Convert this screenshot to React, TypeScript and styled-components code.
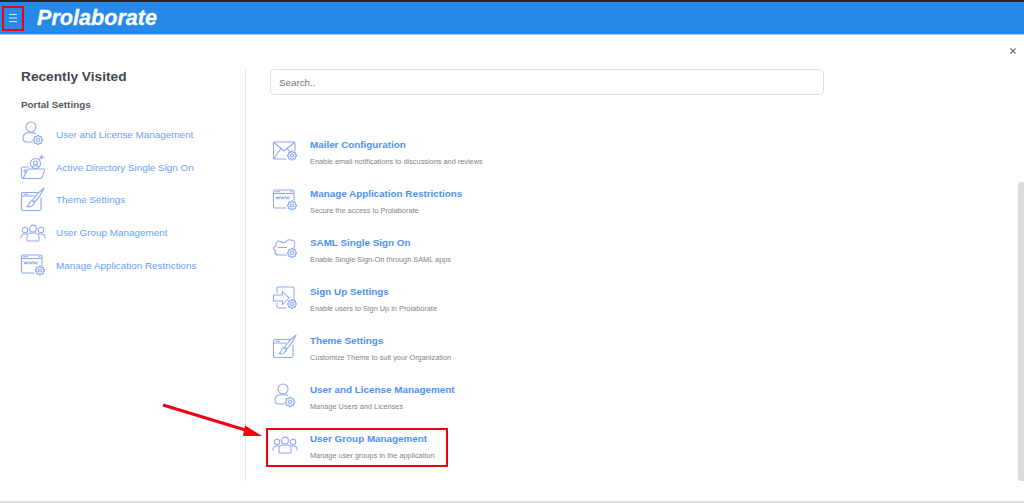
import React from "react";
import styled, { createGlobalStyle } from "styled-components";

const Global = createGlobalStyle`
  html, body { margin: 0; padding: 0; background: #fff; overflow: hidden; }
  body { font-family: "Liberation Sans", Arial, sans-serif; }
  * { box-sizing: border-box; }
`;

const Page = styled.div`
  position: relative;
  width: 1024px;
  height: 503px;
  display: flex;
  flex-direction: column;
  background: #fff;
  overflow: hidden;
`;
const Header = styled.header`
  height: 35px;
  flex: none;
  display: flex;
  align-items: center;
  background: #2688e8;
  border-top: 2px solid #24242e;
  border-bottom: 1px solid #a9c4e2;
  padding-left: 6px;
`;
const MenuButton = styled.button`
  width: 13px;
  height: 13px;
  padding: 0;
  border: 0;
  background: transparent;
  display: flex;
  align-items: center;
  justify-content: center;
  margin-right: 18px;
`;
const Logo = styled.div`
  color: #fff;
  font-size: 21.6px;
  font-weight: 700;
  font-style: italic;
  line-height: 30px;
  -webkit-text-stroke: 0.3px #fff;
`;
const Body = styled.main`
  flex: 1;
  min-height: 0;
  display: flex;
  padding-top: 35px;
`;
const Sidebar = styled.aside`
  width: 246px;
  flex: none;
  height: 411px;
  border-right: 1px solid #e2e2e2;
  padding-left: 21px;
`;
const SideTitle = styled.h2`
  margin: -1px 0 0;
  font-size: 13.7px;
  line-height: 16px;
  font-weight: 700;
  color: #44474d;
`;
const SideSub = styled.h3`
  margin: 14px 0 0;
  font-size: 9.9px;
  line-height: 12px;
  font-weight: 700;
  color: #54575d;
`;
const SideList = styled.div`
  display: flex;
  flex-direction: column;
  margin: 7px 0 0 -1px;
`;
const SideRow = styled.a`
  height: 32.75px;
  display: flex;
  align-items: center;
  gap: 10px;
  color: #6a9ff4;
  font-size: 9.9px;
`;
const SideIcon = styled.span`
  width: 26px;
  height: 26px;
  flex: none;
  display: flex;
`;
const Content = styled.section`
  flex: 1;
  padding-left: 24px;
`;
const Search = styled.input`
  display: block;
  width: 554px;
  height: 26px;
  margin: -1px 0 0 0;
  padding: 0 8px;
  border: 1px solid #dedde6;
  border-radius: 5px;
  font-family: "Liberation Sans", Arial, sans-serif;
  font-size: 9.8px;
  outline: none;
  &::placeholder { color: #74787e; opacity: 1; }
`;
const ItemList = styled.div`
  display: flex;
  flex-direction: column;
  margin-top: 43px;
`;
const Item = styled.a`
  height: 49px;
  display: flex;
  align-items: flex-start;
  padding-left: 2px;
`;
const ItemIcon = styled.span`
  width: 38px;
  height: 26px;
  flex: none;
  display: flex;
`;
const ItemText = styled.div`
  display: flex;
  flex-direction: column;
`;
const ItemTitle = styled.div`
  font-size: 9.85px;
  line-height: 13px;
  font-weight: 700;
  color: #4d91f3;
`;
const ItemDesc = styled.div`
  margin-top: 6px;
  font-size: 7.35px;
  line-height: 10px;
  color: #808388;
`;
const Scroll = styled.div`
  position: absolute;
  right: 0;
  top: 182px;
  width: 6px;
  height: 299px;
  background: #dcdcdc;
  border-radius: 3px 0 0 3px;
`;
const Close = styled.div`
  position: absolute;
  left: 1008px;
  top: 46px;
  width: 10px;
  height: 10px;
  display: flex;
`;
const FootBar = styled.div`
  position: absolute;
  left: 0;
  right: 0;
  bottom: 0;
  height: 2px;
  background: #dcdcdc;
`;
const RedBox = styled.div<{ $l: number; $t: number; $w: number; $h: number }>`
  position: absolute;
  left: ${(p) => p.$l}px;
  top: ${(p) => p.$t}px;
  width: ${(p) => p.$w}px;
  height: ${(p) => p.$h}px;
  border: 2px solid #f00010;
`;
const Arrow = styled.svg`
  position: absolute;
  left: 155px;
  top: 398px;
  width: 115px;
  height: 45px;
`;

const S = { fill: "none", stroke: "#8ea6f6", strokeWidth: 1.05, strokeLinecap: "round", strokeLinejoin: "round" } as const;

const gearPoints = (x: number, y: number, r: number) => {
  const out: string[] = [];
  const R = r + 1.2;
  for (let i = 0; i < 8; i++) {
    const a = (i * Math.PI) / 4;
    const s = 0.2;
    const pts: [number, number][] = [
      [r, a - s * 1.5],
      [R, a - s * 0.7],
      [R, a + s * 0.7],
      [r, a + s * 1.5],
    ];
    pts.forEach(([d, t]) => out.push(`${(x + Math.cos(t) * d).toFixed(2)},${(y + Math.sin(t) * d).toFixed(2)}`));
  }
  return out.join(" ");
};

const Gear = ({ x, y, r = 3.4 }: { x: number; y: number; r?: number }) => (
  <g>
    <polygon points={gearPoints(x, y, r)} fill="#fff" />
    <circle cx={x} cy={y} r={r * 0.45} />
  </g>
);

const Svg = ({ children }: { children: React.ReactNode }) => (
  <svg width="26" height="26" viewBox="0 0 26 26" {...S}>{children}</svg>
);

const UserGear = () => (
  <Svg>
    <circle cx="11" cy="6" r="5" />
    <path d="M15.500 12.500C14 12 13 11.800 11 11.800H8.500C5 11.800 3 14 3 17C3 19.500 4.500 21 7 21H12.500" />
    <Gear x={18} y={19} r={3.5} />
  </Svg>
);
const FolderIcon = () => (
  <Svg>
    <path d="M3 24.500H20C21 24.500 21.800 24 22.200 23L24.500 16.500C24.800 15.500 24.200 15 23.500 15H9C8 15 7.500 15.500 7 16.500L3 24.500C2 24.500 1.500 24 1.500 23V14.500C1.500 13.500 2 13 3 13H8.500" />
    <path d="M3.500 17H6.500M5 15.500V18.500" />
    <circle cx="15.500" cy="9.500" r="5" fill="#fff" />
    <circle cx="15.500" cy="9" r="2" />
    <path d="M12.500 12.800C13.500 11.500 17.500 11.500 18.500 12.800" />
    <path d="M19 5.500L22 2.500M21.800 1V5M20 3H24" />
  </Svg>
);
const ThemeIcon = () => (
  <Svg>
    <path d="M17.500 5.500H3C2 5.500 1.500 6 1.500 7V22C1.500 23 2 23.500 3 23.500H19.500C20.500 23.500 21 23 21 22V11" />
    <path d="M2 9H14M4 7.300H7.500" />
    <path d="M24 1C20 4 15.500 9 12.500 13L14.500 15C18 12 21.500 6.500 24 1Z" />
    <path d="M12 13.500C9.500 14 9.500 16 9 17.500C8.500 18.500 7.500 19 7 19.500C9.500 20.500 13.500 19.500 14.500 15.500Z" />
  </Svg>
);
const GroupIcon = () => (
  <Svg>
    <circle cx="13" cy="8.500" r="3.400" />
    <circle cx="5" cy="10" r="2.800" />
    <circle cx="21" cy="10" r="2.800" />
    <path d="M7 20V17C7 14.500 9 13 11 13H15C17 13 19 14.500 19 17V20C19 20.500 18.500 21 18 21H8C7.500 21 7 20.500 7 20Z" />
    <path d="M7.500 14H4.500C2.500 14 1 15.500 1 17.500V18M18.500 14H21.500C23.500 14 25 15.500 25 17.500V18" />
  </Svg>
);
const WwwIcon = () => (
  <Svg>
    <path d="M14 21H3C2 21 1.500 20.500 1.500 19.500V4.500C1.500 3.500 2 3 3 3H20.500C21.500 3 22 3.500 22 4.500V13.500" />
    <path d="M1.500 6.500H22" />
    <path d="M3.500 4.800H8M18.500 4.800H20" />
    <path d="M4 9.800L4.800 12.200L5.800 9.800L6.800 12.200L7.600 9.800M8.800 9.800L9.600 12.200L10.600 9.800L11.600 12.200L12.400 9.800M13.600 9.800L14.400 12.200L15.400 9.800L16.400 12.200L17.200 9.800" strokeWidth="1" />
    <Gear x={20} y={18.500} r={3.300} />
  </Svg>
);
const MailIcon = () => (
  <Svg>
    <path d="M14 21H3C2 21 1.500 20.500 1.500 19.500V5.500C1.500 4.500 2 4 3 4H21.500C22.500 4 23 4.500 23 5.500V12.500" />
    <path d="M2 4.500L12 13L22.500 4.500M2 20.500L9 10.500M15.500 11L18.500 14" />
    <Gear x={20} y={17.500} r={3.300} />
  </Svg>
);
const SamlIcon = () => (
  <Svg>
    <path d="M14.500 19H7C5 19 3 18.500 3 17C3 16 4 15.500 3.500 15C2.500 14.500 1.500 14 1.500 12.500C1.500 11 2.500 10.500 3.500 10.500C4 10.500 4.500 10 4 9C3.500 7 5 5 7 5C8.500 5 9 6 10.500 6.500C12 7 13.500 6.500 14.500 5C15.500 3.500 17 3.500 18.500 4C20 4.500 21 4 22 5C23 6 23 8 22.500 9.500C22.200 10.500 22 11 22 12.500" />
    <path d="M6 11.500H11.500M13 11.500H14.500" />
    <Gear x={20} y={17} r={3.300} />
  </Svg>
);
const SignUpIcon = () => (
  <Svg>
    <path d="M5 8V3.500C5 2.500 5.500 2 6.500 2H20.500C21.500 2 22 2.500 22 3.500V14.500M14 23H6.500C5.500 23 5 22.500 5 21.500V18" />
    <path d="M1.500 10H10.500V6.500L17 13L10.500 19.500V16H1.500Z" />
    <Gear x={20} y={19} r={3.200} />
  </Svg>
);

const recent = [
  { icon: <UserGear />, label: "User and License Management" },
  { icon: <FolderIcon />, label: "Active Directory Single Sign On" },
  { icon: <ThemeIcon />, label: "Theme Settings" },
  { icon: <GroupIcon />, label: "User Group Management" },
  { icon: <WwwIcon />, label: "Manage Application Restrictions" },
];
const items = [
  { icon: <MailIcon />, t: "Mailer Configuration", d: "Enable email notifications to discussions and reviews" },
  { icon: <WwwIcon />, t: "Manage Application Restrictions", d: "Secure the access to Prolaborate" },
  { icon: <SamlIcon />, t: "SAML Single Sign On", d: "Enable Single Sign-On through SAML apps" },
  { icon: <SignUpIcon />, t: "Sign Up Settings", d: "Enable users to Sign Up in Prolaborate" },
  { icon: <ThemeIcon />, t: "Theme Settings", d: "Customize Theme to suit your Organization" },
  { icon: <UserGear />, t: "User and License Management", d: "Manage Users and Licenses" },
  { icon: <GroupIcon />, t: "User Group Management", d: "Manage user groups in the application" },
];

export default function App() {
  return (
    <Page>
      <Global />
      <Header>
        <MenuButton aria-label="Menu">
          <svg width="10" height="10" viewBox="0 0 10 10" stroke="#d5e8fb" strokeWidth="1">
            <path d="M1 1.500H9M1 5H9M1 8.500H9" />
          </svg>
        </MenuButton>
        <Logo>Prolaborate</Logo>
      </Header>
      <Body>
        <Sidebar>
          <SideTitle>Recently Visited</SideTitle>
          <SideSub>Portal Settings</SideSub>
          <SideList>
            {recent.map((r) => (
              <SideRow key={r.label}>
                <SideIcon>{r.icon}</SideIcon>
                {r.label}
              </SideRow>
            ))}
          </SideList>
        </Sidebar>
        <Content>
          <Search placeholder="Search.." />
          <ItemList>
            {items.map((i) => (
              <Item key={i.t}>
                <ItemIcon>{i.icon}</ItemIcon>
                <ItemText>
                  <ItemTitle>{i.t}</ItemTitle>
                  <ItemDesc>{i.d}</ItemDesc>
                </ItemText>
              </Item>
            ))}
          </ItemList>
        </Content>
      </Body>
      <Close>
        <svg width="10" height="10" viewBox="0 0 10 10" stroke="#66717c" strokeWidth="1.200">
          <path d="M2.500 2.500L7.500 7.500M7.500 2.500L2.500 7.500" />
        </svg>
      </Close>
      <Scroll />
      <FootBar />
      <RedBox $l={2} $t={6} $w={22} $h={25} />
      <RedBox $l={266} $t={428} $w={182} $h={39} />
      <Arrow viewBox="0 0 115 45">
        <path d="M8 7L92 32.500" stroke="#f00010" strokeWidth="3" />
        <path d="M107 38L90 27.500L88 38Z" fill="#f00010" />
      </Arrow>
    </Page>
  );
}
